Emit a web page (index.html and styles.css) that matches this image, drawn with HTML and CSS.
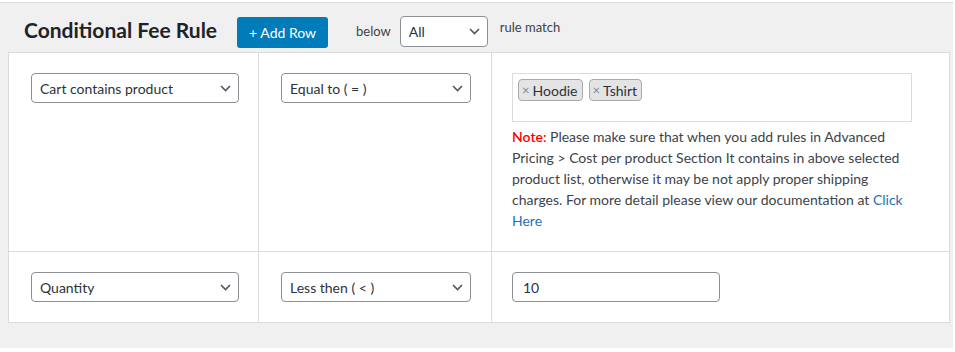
FILE: index.html
```html
<!DOCTYPE html>
<html lang="en">

<head>
  <meta charset="UTF-8">
  <meta name="viewport" content="width=device-width, initial-scale=1.0">
  <title>Conditional Fee Rule</title>
  <link rel="stylesheet" href="styles.css">
</head>

<body>
  <div class="wrap">
    <div class="rule-head">
      <h2>Conditional Fee Rule</h2>
      <button class="button-primary">+ Add Row</button>
      <span class="below">below</span>
      <div class="select-wrap select-small">
        <select>
          <option>All</option>
          <option>Any</option>
        </select>
        <svg class="chevron" width="11" height="7" viewBox="0 0 11 7"><path d="M1 1l4.5 4.5L10 1" fill="none" stroke="#50575e" stroke-width="1.6"/></svg>
      </div>
      <span class="rule-match">rule match</span>
    </div>

    <table class="rule-table">
      <colgroup>
        <col class="col-cond">
        <col class="col-op">
        <col>
      </colgroup>
      <tr>
        <td>
          <div class="select-wrap">
            <select>
              <option>Cart contains product</option>
            </select>
            <svg class="chevron" width="11" height="7" viewBox="0 0 11 7"><path d="M1 1l4.5 4.5L10 1" fill="none" stroke="#50575e" stroke-width="1.6"/></svg>
          </div>
        </td>
        <td>
          <div class="select-wrap select-op">
            <select>
              <option>Equal to ( = )</option>
            </select>
            <svg class="chevron" width="11" height="7" viewBox="0 0 11 7"><path d="M1 1l4.5 4.5L10 1" fill="none" stroke="#50575e" stroke-width="1.6"/></svg>
          </div>
        </td>
        <td class="cell-value">
          <div class="tag-box">
            <span class="tag"><span class="tag-x">×</span>Hoodie</span>
            <span class="tag"><span class="tag-x">×</span>Tshirt</span>
          </div>
          <p class="note">
            <strong>Note:</strong> Please make sure that when you add rules in Advanced Pricing &gt; Cost per product Section It contains in above selected product list, otherwise it may be not apply proper shipping charges. For more detail please view our documentation at <a href="#">Click Here</a>
          </p>
        </td>
      </tr>
      <tr>
        <td>
          <div class="select-wrap">
            <select>
              <option>Quantity</option>
            </select>
            <svg class="chevron" width="11" height="7" viewBox="0 0 11 7"><path d="M1 1l4.5 4.5L10 1" fill="none" stroke="#50575e" stroke-width="1.6"/></svg>
          </div>
        </td>
        <td>
          <div class="select-wrap select-op">
            <select>
              <option>Less then ( &lt; )</option>
            </select>
            <svg class="chevron" width="11" height="7" viewBox="0 0 11 7"><path d="M1 1l4.5 4.5L10 1" fill="none" stroke="#50575e" stroke-width="1.6"/></svg>
          </div>
        </td>
        <td class="cell-value">
          <input type="text" class="qty-input" value="10">
        </td>
      </tr>
    </table>
  </div>
</body>
</html>
```

FILE: styles.css
```css
body {
  font-family: Lato, 'Liberation Sans', sans-serif;
  margin: 0;
  padding: 2px 0 0 0;
  background-color: #ffffff;
  color: #3c434a;
  font-size: 14px;
}

.wrap {
  width: 945px;
  height: 345px;
  background-color: #f0f0f1;
  border-top: 1px solid #dcdcde;
  padding: 0 0 0 8px;
  overflow: hidden;
}

.rule-head {
  display: flex;
  align-items: center;
  height: 41px;
  padding: 6px 0 0 16px;
}

.rule-head h2 {
  margin: 0 20px 0 0;
  font-size: 21px;
  font-weight: 700;
  color: #1d2327;
}

.button-primary {
  font-family: inherit;
  font-size: 14px;
  background-color: #007cba;
  color: #ffffff;
  border: none;
  border-radius: 3px;
  width: 91px;
  height: 31px;
  margin-top: 6px;
  cursor: pointer;
}

.below {
  margin: 2px 9px 0 28px;
  font-size: 13px;
}

.rule-match {
  margin: -5px 0 0 12px;
  font-size: 13px;
}

.select-wrap {
  position: relative;
  width: 208px;
}

.select-wrap select {
  -webkit-appearance: none;
  appearance: none;
  width: 100%;
  height: 30px;
  padding: 0 24px 0 8px;
  font-family: inherit;
  font-size: 14px;
  color: #2c3338;
  background: #ffffff;
  border: 1px solid #8c8f94;
  border-radius: 4px;
  display: block;
}

.select-small {
  width: 88px;
  margin-top: 3px;
}

.select-small select {
  height: 31px;
}

.select-op {
  width: 190px;
}

.chevron {
  position: absolute;
  right: 8px;
  top: 12px;
  pointer-events: none;
}

.rule-table {
  width: 942px;
  table-layout: fixed;
  border-collapse: collapse;
  background: #ffffff;
  margin-top: 2px;
}

.col-cond {
  width: 250px;
}

.col-op {
  width: 233px;
}

.rule-table td {
  border: 1px solid #dcdcde;
  padding: 20px 0 20px 22px;
  vertical-align: top;
}

.rule-table td.cell-value {
  padding-left: 20px;
}

.tag-box {
  width: 388px;
  height: 42px;
  border: 1px solid #dcdcde;
  padding: 5px 5px 0 5px;
  display: flex;
  align-items: flex-start;
  gap: 6px;
}

.tag {
  display: inline-flex;
  align-items: center;
  background: #e4e4e4;
  border: 1px solid #aaaaaa;
  border-radius: 4px;
  height: 20px;
  padding: 0 4px 0 3px;
  color: #2c3338;
  font-size: 14px;
}

.tag-x {
  color: #888888;
  font-size: 13px;
  margin-right: 3px;
}

.note {
  width: 400px;
  margin: 4px 0 0 0;
  line-height: 21px;
  font-size: 14px;
}

.note strong {
  color: #ff0000;
  font-weight: 600;
}

.note a {
  color: #2271b1;
  text-decoration: none;
}

.qty-input {
  width: 208px;
  height: 30px;
  box-sizing: border-box;
  border: 1px solid #8c8f94;
  border-radius: 4px;
  padding: 0 10px;
  font-family: inherit;
  font-size: 14px;
  color: #2c3338;
}
```
